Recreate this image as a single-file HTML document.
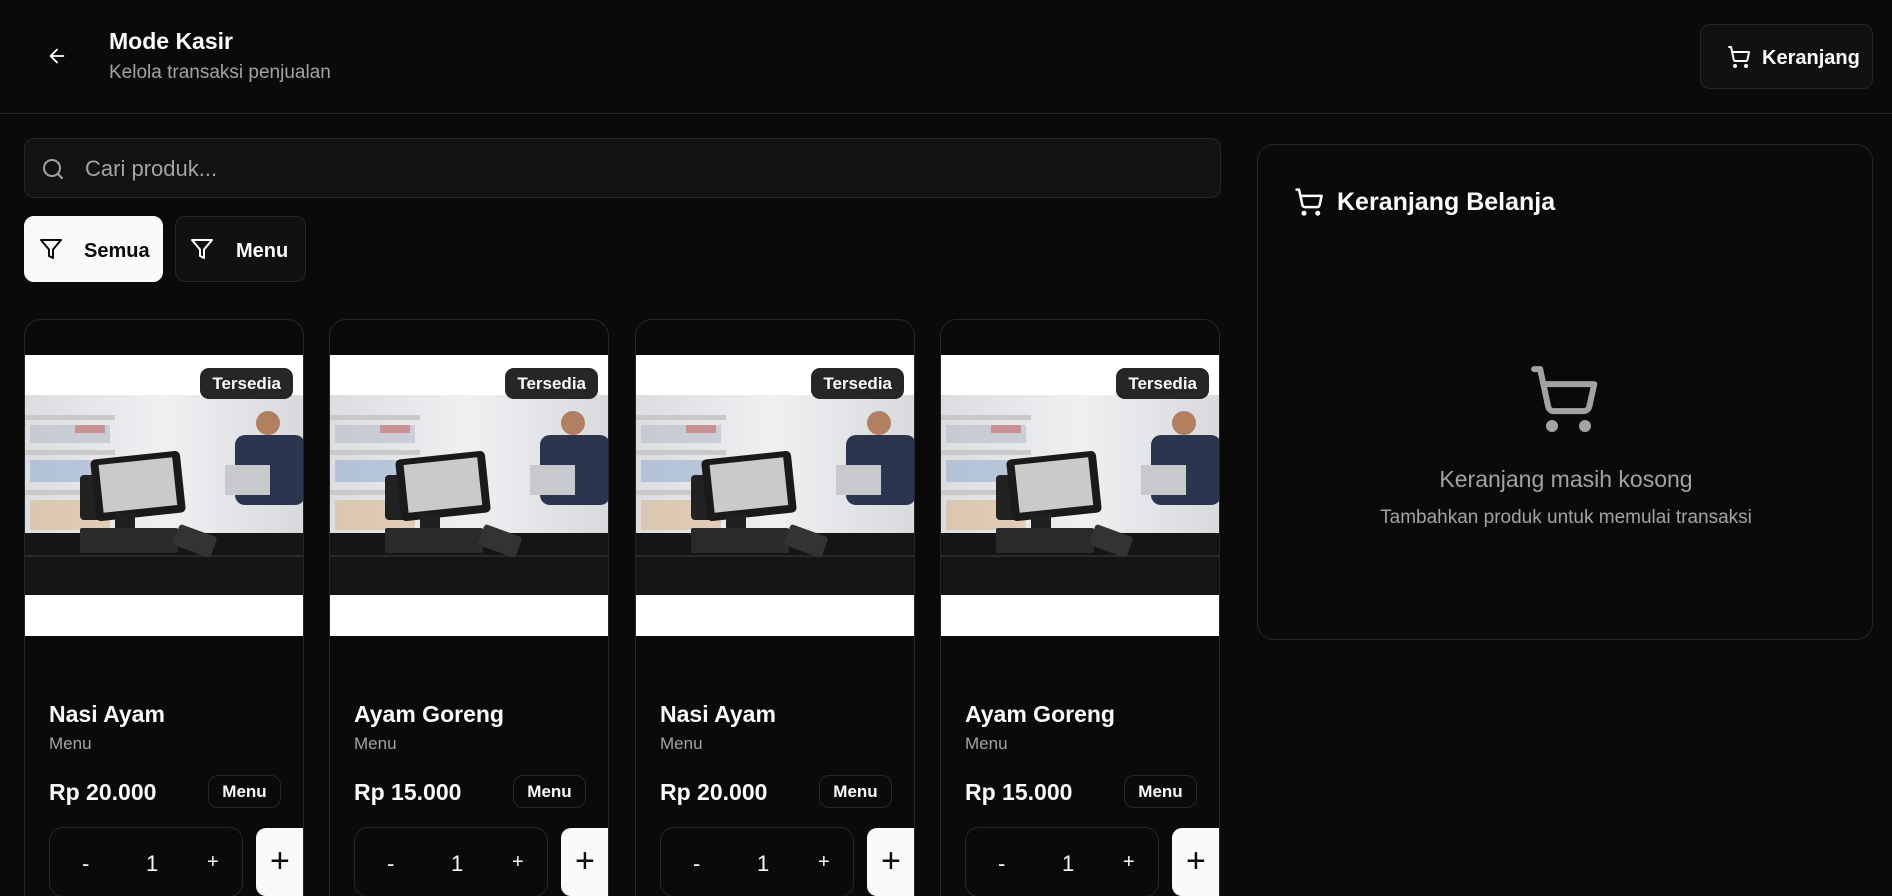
<!DOCTYPE html>
<html><head><meta charset="utf-8">
<style>
*{box-sizing:border-box;margin:0;padding:0}
html,body{width:1892px;height:896px;overflow:hidden;background:#0a0a0a;color:#fafafa;font-family:"Liberation Sans",sans-serif}
#wrap{position:relative;width:1892px;height:896px;overflow:hidden}
.hdr{position:absolute;left:0;top:0;width:1892px;height:114px;border-bottom:1px solid #262626}
.abs{position:absolute}
.t1{left:109px;top:28px;font-size:23px;font-weight:bold}
.t2{left:109px;top:62px;font-size:19px;color:#a3a3a3}
.kbtn{left:1700px;top:24px;width:173px;height:65px;border:1px solid #262626;border-radius:10px;background:#111}
.search{left:24px;top:138px;width:1197px;height:60px;border:1px solid #262626;border-radius:10px;background:#121212}
.fb{top:216px;height:66px;border-radius:10px;border:1px solid #262626;font-size:20px;font-weight:bold}
.card{top:319px;width:280px;height:600px;border:1px solid #262626;border-radius:17px;overflow:hidden;background:#0a0a0a}
.img{position:absolute;left:0;top:35px;width:280px;height:281px;background:#fff}
.badge{position:absolute;right:12px;top:13px;height:31px;padding:0 12px;border-radius:9px;background:#262626;color:#fafafa;font-size:17px;font-weight:bold;line-height:31px}
.nm{position:absolute;left:24px;top:381px;font-size:23px;font-weight:bold}
.ct{position:absolute;left:24px;top:414px;font-size:17px;color:#a3a3a3}
.pr{position:absolute;left:24px;top:459px;font-size:23px;font-weight:bold}
.mb{position:absolute;left:183px;top:455px;width:73px;height:33px;border:1px solid #262626;border-radius:10px;font-size:17px;font-weight:bold;text-align:center;line-height:31px}
.qty{position:absolute;left:24px;top:507px;width:194px;height:70px;border:1px solid #262626;border-radius:14px;font-size:22px}
.qty span{position:absolute;top:23px}
.add{position:absolute;left:231px;top:508px;width:80px;height:68px;background:#fafafa;border-radius:10px;color:#0a0a0a;font-size:34px;line-height:66px;padding-left:14px}
.panel{left:1257px;top:144px;width:616px;height:496px;border:1px solid #262626;border-radius:17px}
</style></head><body><div id="wrap">
<div class="hdr">
<svg class="abs" style="left:46px;top:45px" width="22" height="22" viewBox="0 0 24 24" fill="none" stroke="#fff" stroke-width="2" stroke-linecap="round" stroke-linejoin="round"><path d="M19 12H5M12 19l-7-7 7-7"/></svg>
<div class="abs t1">Mode Kasir</div>
<div class="abs t2">Kelola transaksi penjualan</div>
<div class="abs kbtn">
<svg class="abs" style="left:26px;top:20px" width="24" height="24" viewBox="0 0 24 24" fill="none" stroke="#fff" stroke-width="2" stroke-linecap="round" stroke-linejoin="round"><circle cx="8" cy="21" r="1"/><circle cx="19" cy="21" r="1"/><path d="M2.05 2.05h2l2.66 12.42a2 2 0 0 0 2 1.58h9.78a2 2 0 0 0 1.95-1.57l1.65-7.43H5.12"/></svg>
<div class="abs" style="left:61px;top:22px;font-size:20px;font-weight:bold">Keranjang</div>
</div>
</div>

<div class="abs search">
<svg class="abs" style="left:16px;top:18px" width="24" height="24" viewBox="0 0 24 24" fill="none" stroke="#a3a3a3" stroke-width="2" stroke-linecap="round"><circle cx="11" cy="11" r="8"/><path d="m21 21-4.3-4.3"/></svg>
<div class="abs" style="left:60px;top:17px;font-size:22px;color:#a3a3a3">Cari produk...</div>
</div>

<div class="abs fb" style="left:24px;width:139px;background:#fafafa;color:#0a0a0a;border-color:#fafafa">
<svg class="abs" style="left:14px;top:20px" width="24" height="24" viewBox="0 0 24 24" fill="none" stroke="#0a0a0a" stroke-width="2" stroke-linejoin="round"><path d="M22 3H2l8 9.46V19l4 2v-8.54L22 3z"/></svg>
<div class="abs" style="left:59px;top:23px">Semua</div></div>
<div class="abs fb" style="left:175px;width:131px;background:#111">
<svg class="abs" style="left:14px;top:20px" width="24" height="24" viewBox="0 0 24 24" fill="none" stroke="#fff" stroke-width="2" stroke-linejoin="round"><path d="M22 3H2l8 9.46V19l4 2v-8.54L22 3z"/></svg>
<div class="abs" style="left:60px;top:23px">Menu</div></div>

<svg width="0" height="0" style="position:absolute">
<defs>
<linearGradient id="bg" x1="0" x2="1"><stop offset="0" stop-color="#dcdde0"/><stop offset=".5" stop-color="#eef0f2"/><stop offset="1" stop-color="#d8d9dc"/></linearGradient>
<g id="photo">
<rect width="280" height="200" fill="url(#bg)"/>
<rect x="0" y="20" width="90" height="5" fill="#c9c9c9"/><rect x="0" y="55" width="90" height="5" fill="#c9c9c9"/><rect x="0" y="95" width="90" height="5" fill="#c9c9c9"/>
<rect x="5" y="30" width="80" height="18" fill="#b7bcc8" opacity=".6"/><rect x="50" y="30" width="30" height="8" fill="#c55" opacity=".5"/>
<rect x="5" y="65" width="80" height="22" fill="#8aa6c9" opacity=".5"/><rect x="5" y="105" width="80" height="30" fill="#d9a46a" opacity=".4"/>
<rect x="210" y="40" width="70" height="70" fill="#2a3550" rx="10"/><circle cx="243" cy="28" r="12" fill="#b08060"/>
<rect x="200" y="70" width="45" height="30" fill="#c8c9cc"/>
<rect x="0" y="138" width="280" height="62" fill="#151515"/><rect x="0" y="160" width="280" height="2" fill="#2a2a2a"/>
<rect x="55" y="80" width="30" height="45" rx="4" fill="#222"/>
<rect x="68" y="60" width="90" height="62" rx="5" fill="#1a1a1a" transform="rotate(-6 113 91)"/>
<rect x="76" y="66" width="74" height="48" fill="#c8cacc" transform="rotate(-6 113 91)"/>
<rect x="90" y="118" width="20" height="18" fill="#202020"/>
<rect x="55" y="133" width="98" height="25" rx="2" fill="#2a2a2a"/>
<rect x="150" y="135" width="40" height="22" rx="3" fill="#333" transform="rotate(20 170 146)"/>
</g></defs></svg>

<div class="abs card" style="left:24px"><div class="img"><svg style="position:absolute;top:40px" width="280" height="200"><use href="#photo"/></svg><div class="badge">Tersedia</div></div>
<div class="nm">Nasi Ayam</div><div class="ct">Menu</div><div class="pr">Rp 20.000</div><div class="mb">Menu</div>
<div class="qty"><span style="left:32px">-</span><span style="left:96px">1</span><span style="left:157px;font-size:20px">+</span></div><div class="add">+</div></div>

<div class="abs card" style="left:329px"><div class="img"><svg style="position:absolute;top:40px" width="280" height="200"><use href="#photo"/></svg><div class="badge">Tersedia</div></div>
<div class="nm">Ayam Goreng</div><div class="ct">Menu</div><div class="pr">Rp 15.000</div><div class="mb">Menu</div>
<div class="qty"><span style="left:32px">-</span><span style="left:96px">1</span><span style="left:157px;font-size:20px">+</span></div><div class="add">+</div></div>

<div class="abs card" style="left:635px"><div class="img"><svg style="position:absolute;top:40px" width="280" height="200"><use href="#photo"/></svg><div class="badge">Tersedia</div></div>
<div class="nm">Nasi Ayam</div><div class="ct">Menu</div><div class="pr">Rp 20.000</div><div class="mb">Menu</div>
<div class="qty"><span style="left:32px">-</span><span style="left:96px">1</span><span style="left:157px;font-size:20px">+</span></div><div class="add">+</div></div>

<div class="abs card" style="left:940px"><div class="img"><svg style="position:absolute;top:40px" width="280" height="200"><use href="#photo"/></svg><div class="badge">Tersedia</div></div>
<div class="nm">Ayam Goreng</div><div class="ct">Menu</div><div class="pr">Rp 15.000</div><div class="mb">Menu</div>
<div class="qty"><span style="left:32px">-</span><span style="left:96px">1</span><span style="left:157px;font-size:20px">+</span></div><div class="add">+</div></div>

<div class="abs panel">
<svg class="abs" style="left:36px;top:42px" width="30" height="30" viewBox="0 0 24 24" fill="none" stroke="#fff" stroke-width="2" stroke-linecap="round" stroke-linejoin="round"><circle cx="8" cy="21" r="1"/><circle cx="19" cy="21" r="1"/><path d="M2.05 2.05h2l2.66 12.42a2 2 0 0 0 2 1.58h9.78a2 2 0 0 0 1.95-1.57l1.65-7.43H5.12"/></svg>
<div class="abs" style="left:79px;top:43px;font-size:25px;font-weight:bold">Keranjang Belanja</div>
<svg class="abs" style="left:270px;top:218px" width="72" height="72" viewBox="0 0 24 24" fill="none" stroke="#a3a3a3" stroke-width="2" stroke-linecap="round" stroke-linejoin="round"><circle cx="8" cy="21" r="1"/><circle cx="19" cy="21" r="1"/><path d="M2.05 2.05h2l2.66 12.42a2 2 0 0 0 2 1.58h9.78a2 2 0 0 0 1.95-1.57l1.65-7.43H5.12"/></svg>
<div class="abs" style="left:0;width:616px;top:321px;text-align:center;font-size:23px;color:#a3a3a3">Keranjang masih kosong</div>
<div class="abs" style="left:0;width:616px;top:362px;text-align:center;font-size:19px;color:#a3a3a3">Tambahkan produk untuk memulai transaksi</div>
</div>
</div></body></html>
